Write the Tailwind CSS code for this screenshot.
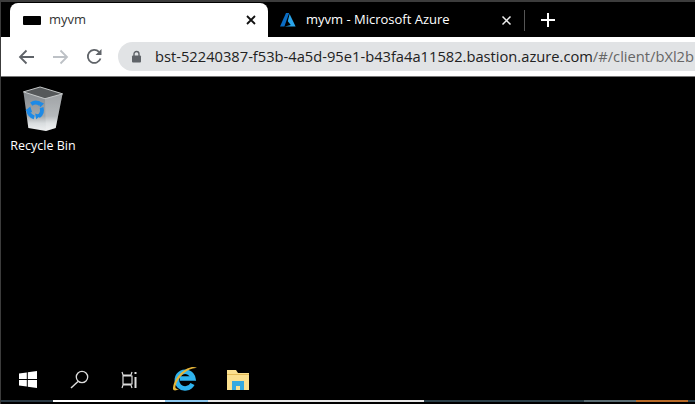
<!DOCTYPE html>
<html lang="en">
<head>
  <meta charset="UTF-8" />
  <title>myvm</title>
  <script src="https://cdn.jsdelivr.net/npm/@tailwindcss/browser@4"></script>
</head>
<body class="bg-black font-['Open_Sans',sans-serif]">
  <div class="w-[695px] h-[404px] flex flex-col overflow-hidden bg-black border-t-2 border-l border-[#3c3c3c]">
    <!-- tab strip -->
    <div class="h-[35px] flex items-end shrink-0 text-[13px]">
      <div class="ml-[9px] w-[258px] h-[34px] bg-white rounded-t-[8px] flex items-center pl-[13px] pr-[11px] text-[#333]">
        <div class="w-[18px] h-[9px] bg-black rounded-[1px]"></div>
        <span class="ml-[8px]">myvm</span>
        <svg class="ml-auto" width="12" height="12" viewBox="0 0 12 12"><path d="M2 2l8 8M10 2l-8 8" stroke="#111" stroke-width="1.8"/></svg>
      </div>
      <div class="w-[246px] h-[34px] flex items-center pl-[12px] pr-[2px] text-white">
        <svg width="16" height="14" viewBox="0 0 16 14"><path d="M6 0h3.2L4.4 13.500H0z" fill="#0a6cc4"/><path d="M9.600 1l6 12.500H4.800l6-1.600-3-3.600z" fill="#2aa5ea"/></svg>
        <span class="ml-[10px]">myvm - Microsoft Azure</span>
        <svg class="ml-auto" width="11" height="11" viewBox="0 0 11 11"><path d="M1.500 1.500l8 8M9.500 1.500l-8 8" stroke="#eee" stroke-width="1.500"/></svg>
      </div>
      <div class="w-px h-[21px] bg-[#555] mb-[6px] ml-[10px]"></div>
      <svg class="ml-[16px] mb-[10px]" width="14" height="14" viewBox="0 0 14 14"><path d="M7 0v14M0 7h14" stroke="#fff" stroke-width="2"/></svg>
    </div>
    <!-- toolbar -->
    <div class="h-[39px] bg-white shrink-0 flex items-center pl-[17px]">
      <svg width="17" height="16" viewBox="0 0 17 16"><path d="M16 8H2M8.500 1.500L2 8l6.500 6.500" fill="none" stroke="#5f6368" stroke-width="1.800"/></svg>
      <svg class="ml-[17px]" width="17" height="16" viewBox="0 0 17 16"><path d="M1 8h14M8.500 1.500L15 8l-6.500 6.500" fill="none" stroke="#bdc1c6" stroke-width="1.800"/></svg>
      <svg class="ml-[17px]" width="17" height="17" viewBox="0 0 17 17"><path d="M14.500 10.500A6.500 6.500 0 1 1 13 3.900" fill="none" stroke="#5f6368" stroke-width="1.800"/><path d="M15.500 1v6h-6z" fill="#5f6368"/></svg>
      <div class="ml-[15px] flex-1 h-[29px] bg-[#e1e3e5] rounded-l-full flex items-center pl-[13px] whitespace-nowrap overflow-hidden text-[14.7px]">
        <svg class="shrink-0" width="11" height="13" viewBox="0 0 11 13"><path d="M3 6V4a2.500 2.500 0 0 1 5 0v2" fill="none" stroke="#5f6368" stroke-width="1.400"/><rect x="1" y="5.500" width="9" height="7" rx="1" fill="#5f6368"/></svg>
        <span class="ml-[13px] text-[#222]">bst-52240387-f53b-4a5d-95e1-b43fa4a11582.bastion.azure.com<span class="text-[#666]">/#/client/bXl2b</span></span>
      </div>
    </div>
    <div class="h-px bg-[#777] shrink-0"></div>
    <!-- desktop -->
    <div class="flex-1 flex flex-col bg-black">
      <div class="flex-1 pt-[9px] pl-[9px]">
        <div class="w-[66px] flex flex-col items-center">
          <svg class="ml-[-1px]" width="42" height="46" viewBox="0 0 42 47">
            <defs>
              <linearGradient id="bin" x1="0" y1="0" x2="0" y2="1"><stop offset="0" stop-color="#85898d"/><stop offset="0.62" stop-color="#a4a9ac"/><stop offset="0.8" stop-color="#d8dcde"/><stop offset="1" stop-color="#eef0f1"/></linearGradient>
            </defs>
            <path d="M1 6L23 12 41 8 34 43 24 46 6 43z" fill="url(#bin)"/>
            <path d="M23 12L24 46 34 43 41 8z" fill="#fff" fill-opacity="0.2"/>
            <path d="M1 6L18 1 41 8 23 13z" fill="#55585a" stroke="#c9cccd" stroke-width="1"/>
            <g fill="none" stroke="#1d8ae6" stroke-width="4">
              <path d="M9 18.500a8 8 0 0 1 9 0"/>
              <path d="M19.500 22a8 8 0 0 1-3 9"/>
              <path d="M12 32a8 8 0 0 1-6-8"/>
            </g>
            <path d="M16 15l6 3-4 4zM19 30l-5 4-1-6zM3 25l5-4 2 6z" fill="#1d8ae6"/>
          </svg>
          <span class="text-[12.5px] leading-[16px] text-white mt-[6px]">Recycle Bin</span>
        </div>
      </div>
      <!-- taskbar -->
      <div class="h-[36px] pb-[5px] flex items-center shrink-0">
        <svg class="ml-[18px]" width="18" height="17" viewBox="0 0 18 17"><path d="M0 2.500L7.800 1.400V8H0zM8.800 1.200L18 0v8H8.800zM0 9h7.800v6.600L0 14.500zM8.800 9H18v8l-9.200-1.300z" fill="#fff"/></svg>
        <svg class="ml-[33px]" width="19" height="19" viewBox="0 0 19 19"><circle cx="12" cy="7" r="5.700" fill="none" stroke="#ddd" stroke-width="1.300"/><path d="M8 11.500L1 18" stroke="#ddd" stroke-width="1.500"/></svg>
        <svg class="ml-[32px]" width="18" height="18" viewBox="0 0 18 18"><path d="M1 1l1 3h8l1-3M1 17l1-3h8l1 3M2 5h9v8H2z" fill="none" stroke="#ddd" stroke-width="1.200"/><path d="M14.500 1v2M14.500 6v11" stroke="#ddd" stroke-width="2"/></svg>
        <svg class="ml-[33px] -mt-[2px]" width="26" height="26" viewBox="0 0 26 26">
          <path d="M20.500 18a8.300 8.300 0 1 1 .8-5.500H8" fill="none" stroke="#2fb3ee" stroke-width="4.600"/>
          <path d="M25 2C18-2 3 8 1 22c-.5 3 3 3 6 1-3 0-4-1-3.500-3C6 10 17 1 25 2z" fill="#e5b53a"/>
        </svg>
        <svg class="ml-[28px]" width="24" height="20" viewBox="0 0 24 20"><path d="M1 0h9l2 3h11v17H1z" fill="#fbe08f"/><path d="M1 4h22v1H1z" fill="#e3bb58"/><path d="M6 20v-9h12v9h-4v-4h-4v4z" fill="#35a9e0"/></svg>
      </div>
      <!-- taskbar edge -->
      <div class="h-[2px] mb-[2px] flex shrink-0">
        <div class="w-[52px] bg-[#2b3a44]"></div>
        <div class="w-[112px] bg-white"></div>
        <div class="w-[43px] bg-[#8ec8ee]"></div>
        <div class="w-[216px] bg-[#e6e6e6]"></div>
        <div class="w-[160px] bg-[#2b3f48]"></div>
        <div class="w-[52px] bg-[#5a6c72]"></div>
        <div class="w-[52px] bg-[#b86a28]"></div>
        <div class="flex-1 bg-[#2b3f48]"></div>
      </div>
    </div>
  </div>
</body>
</html>
